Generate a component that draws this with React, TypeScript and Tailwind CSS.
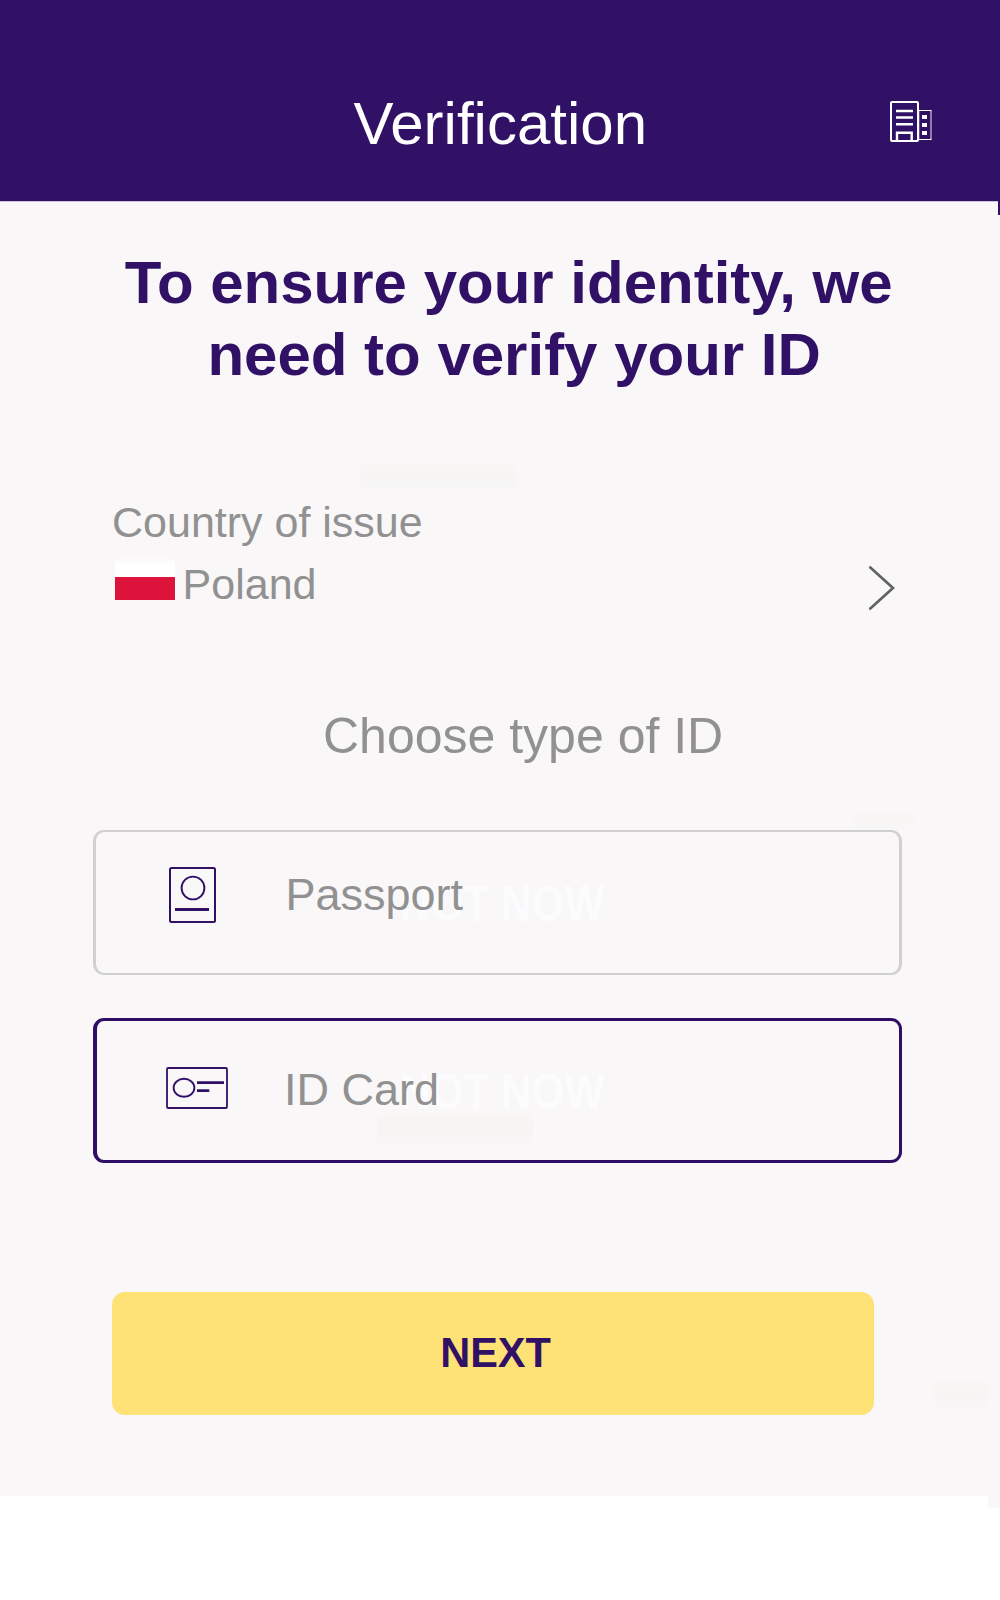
import type { ReactNode } from 'react';

function BuildingIcon() {
  return (
    <svg width="44" height="44" viewBox="889 100 44 44" fill="none" className="block shrink-0">
      <path d="M919 110.5H931V139.5H919" stroke="#ffffff" strokeWidth="1.2" />
      <path d="M931 111V139" stroke="#85739f" strokeWidth="1.5" />
      <path d="M918.6 111V139" stroke="#b9adc8" strokeWidth="1.6" />
      <rect x="891" y="102" width="27" height="39" rx="1" stroke="#ffffff" strokeWidth="2" />
      <path d="M896 111H913M896 117.5H913M896 124.3H913" stroke="#ffffff" strokeWidth="2.6" />
      <path d="M897 140V132.7H911.7V140" stroke="#ffffff" strokeWidth="2.4" />
      <path d="M922 117H927M922 125H927M922 133H927" stroke="#ffffff" strokeWidth="4" />
    </svg>
  );
}

function PassportIcon() {
  return (
    <svg width="47" height="56" viewBox="0 0 47 56" fill="none" stroke="#311166" className="block">
      <rect x="1" y="1" width="45" height="54" rx="1.5" strokeWidth="2" />
      <circle cx="24" cy="21" r="11.4" strokeWidth="1.9" />
      <path d="M6 42.4H40" strokeWidth="3" />
    </svg>
  );
}

function IdCardIcon() {
  return (
    <svg width="62" height="42" viewBox="0 0 62 42" fill="none" stroke="#311166" className="block">
      <rect x="1" y="1" width="60" height="40" rx="1.3" strokeWidth="1.8" />
      <ellipse cx="18" cy="20.8" rx="10.4" ry="9" strokeWidth="1.9" />
      <path d="M31 15.6H58M31 23.6H43.3" strokeWidth="2.6" />
    </svg>
  );
}

type OptionProps = {
  frame: string;
  icon: ReactNode;
  iconBox: string;
  label: string;
  labelBox: string;
  ghostBox: string;
};

function Option({ frame, icon, iconBox, label, labelBox, ghostBox }: OptionProps) {
  return (
    <button className={`relative ml-[93px] flex h-[145px] w-[809px] items-start rounded-[11px] text-left ${frame}`}>
      <span
        aria-hidden="true"
        className={`absolute origin-[0_84.65%] scale-y-[1.17] text-[42.3px] leading-none font-bold whitespace-nowrap text-[#fcfcfe] ${ghostBox}`}
      >
        NOT NOW
      </span>
      <span className={iconBox}>{icon}</span>
      <span className={`relative text-[45px] leading-none whitespace-nowrap text-[#919191] ${labelBox}`}>{label}</span>
    </button>
  );
}

export default function App() {
  return (
    <div className="relative h-[1600px] w-[1000px] overflow-hidden bg-white font-['Liberation_Sans',Arial,sans-serif]">
      <header className="flex h-[201px] items-start bg-[#311165]">
        <h1 className="mt-[94px] ml-[353.5px] w-[535.5px] text-[60px] leading-none text-white">Verification</h1>
        <div className="mt-[100px]">
          <BuildingIcon />
        </div>
      </header>

      <main className="relative flex h-[1295px] flex-col items-start bg-[#f9f7f8]">
        <div className="absolute top-0 left-0 h-px w-[998px] bg-[#cdc3dc]" />
        <div className="absolute top-0 right-0 h-[14px] w-[2px] bg-[#311165]" />
        <div className="absolute right-0 -bottom-[12px] h-[12px] w-[12px] bg-[#f9f7f8]" />
        <div className="absolute top-[261px] left-[360px] h-[33px] w-[156px] bg-linear-to-b from-[#f8f7f5] via-[#f6f5f4] to-[#f9f7f8]" />
        <div className="absolute top-[612px] left-[853px] h-[24px] w-[61px] bg-linear-to-b from-[#f7f6f4] to-[#f9f7f8]" />
        <div className="absolute top-[1178px] left-[933px] h-[30px] w-[55px] bg-linear-to-b from-[#f8f7f5] via-[#f6f5f4] to-[#f9f7f8]" />
        <div className="absolute top-[913px] left-[377px] h-[34px] w-[156px] bg-linear-to-b from-[#f8f7f5] via-[#f6f4f3] to-[#f9f7f8]" />

        <h2 className="mt-[46px] ml-[124.7px] text-[60px] leading-[72px] font-bold whitespace-nowrap text-[#311166]">
          <span className="block">To ensure your identity, we</span>
          <span className="ml-[82.7px] block">need to verify your ID</span>
        </h2>

        <p className="mt-[110px] ml-[112px] text-[43px] leading-none text-[#919191]">Country of issue</p>
        <div className="mt-[12px] ml-[115px] flex h-[60px] w-[780px] items-start">
          <div className="mt-px h-[43px] w-[60px] shrink-0">
            <div className="h-[20px] bg-linear-to-b from-[#f9f7f8] via-white via-40% to-white" />
            <div className="h-[23px] bg-[#dc143c]" />
          </div>
          <span className="mt-[7px] ml-[7.6px] text-[43px] leading-none text-[#919191]">Poland</span>
          <svg width="27" height="46" viewBox="868 565 27 46" fill="none" className="mt-[9px] ml-auto block">
            <path d="M870.3 567.5L893 588L870.3 608.5" stroke="#626262" strokeWidth="2.7" strokeLinecap="round" />
          </svg>
        </div>

        <p className="mt-[95px] ml-[323px] text-[50px] leading-none text-[#919191]">Choose type of ID</p>

        <div className="mt-[69px] flex flex-col gap-[43px]">
          <Option
            frame="border-x-[3px] border-y-2 border-[#d1d0d1]"
            icon={<PassportIcon />}
            iconBox="mt-[35px] ml-[73px] w-[47px]"
            label="Passport"
            labelBox="mt-[40px] ml-[69.4px]"
            ghostBox="top-[54px] left-[304px]"
          />
          <Option
            frame="border-[3px] border-l-4 border-[#2f0f66]"
            icon={<IdCardIcon />}
            iconBox="mt-[46px] ml-[69px] w-[62px]"
            label="ID Card"
            labelBox="mt-[46px] ml-[56px]"
            ghostBox="top-[53px] left-[303px]"
          />
        </div>

        <button className="mt-[129px] ml-[112px] flex h-[123px] w-[762px] items-start rounded-[13px] bg-[#fee275]">
          <span className="mt-[40px] ml-[328.2px] origin-[0_84.65%] scale-y-[1.04] text-[41.5px] leading-none font-bold text-[#311166]">NEXT</span>
        </button>
      </main>
    </div>
  );
}
